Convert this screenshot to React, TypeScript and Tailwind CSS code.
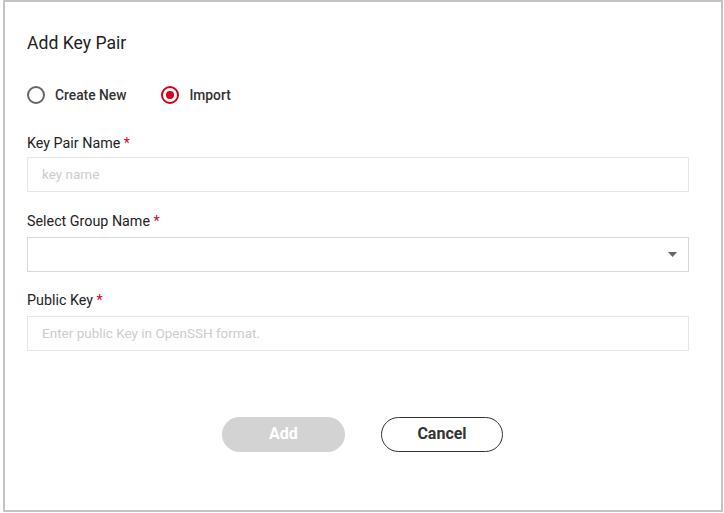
import React, { useState } from 'react'

const font = { fontFamily: 'Roboto, "Liberation Sans", sans-serif' }

const Label = ({ children }: { children: React.ReactNode }) => (
  <div className="text-[14.3px] leading-[20px] text-[#222]">
    {children} <span className="text-[#e0001b]">*</span>
  </div>
)

const Radio = ({ checked, label, onClick }: { checked: boolean; label: string; onClick: () => void }) => (
  <button type="button" onClick={onClick} className="flex items-center gap-[10px]">
    {checked ? (
      <span className="flex h-[18px] w-[18px] items-center justify-center rounded-full border-2 border-[#d4001b]">
        <span className="h-[8px] w-[8px] rounded-full bg-[#d4001b]" />
      </span>
    ) : (
      <span className="h-[18px] w-[18px] rounded-full border-2 border-[#666]" />
    )}
    <span className="text-[13.8px] font-medium text-[#333]">{label}</span>
  </button>
)

export default function App() {
  const [mode, setMode] = useState<'new' | 'import'>('import')

  return (
    <div className="h-[513px] w-[724px] bg-white" style={font}>
      <div className="ml-[3px] h-[512px] w-[720px] border-2 border-[#c4c4c4] pl-[22px] pt-[28px]">
        <div className="w-[662px]">
          <h1 className="text-[17.6px] leading-[26px] text-[#222]">Add Key Pair</h1>

          <div className="mt-[29px] flex items-center gap-[35px]">
            <Radio checked={mode === 'new'} label="Create New" onClick={() => setMode('new')} />
            <Radio checked={mode === 'import'} label="Import" onClick={() => setMode('import')} />
          </div>

          <div className="mt-[27px]">
            <Label>Key Pair Name</Label>
            <input
              placeholder="key name"
              className="mt-[4px] h-[35px] w-full border border-[#e6e6e6] px-[14px] text-[13.5px] outline-none placeholder:text-[#cdcdcd]"
            />
          </div>

          <div className="mt-[19px]">
            <Label>Select Group Name</Label>
            <div className="mt-[6px] flex h-[35px] w-full items-center justify-end border border-[#d9d9d9] pr-[11px]">
              <svg width="9" height="5" viewBox="0 0 9 5">
                <path d="M0 0h9L4.5 5z" fill="#666" />
              </svg>
            </div>
          </div>

          <div className="mt-[18px]">
            <Label>Public Key</Label>
            <input
              placeholder="Enter public Key in OpenSSH format."
              className="mt-[6px] h-[35px] w-full border border-[#e6e6e6] px-[14px] text-[13.5px] outline-none placeholder:text-[#cdcdcd]"
            />
          </div>

          <div className="mt-[66px] flex justify-center gap-[36px] pl-[9px]">
            <button className="h-[35px] w-[123px] rounded-full bg-[#d3d3d3] text-[16px] font-bold text-white">
              Add
            </button>
            <button className="h-[35px] w-[122px] rounded-full border border-[#333] text-[16px] font-bold text-[#333]">
              Cancel
            </button>
          </div>
        </div>
      </div>
    </div>
  )
}
